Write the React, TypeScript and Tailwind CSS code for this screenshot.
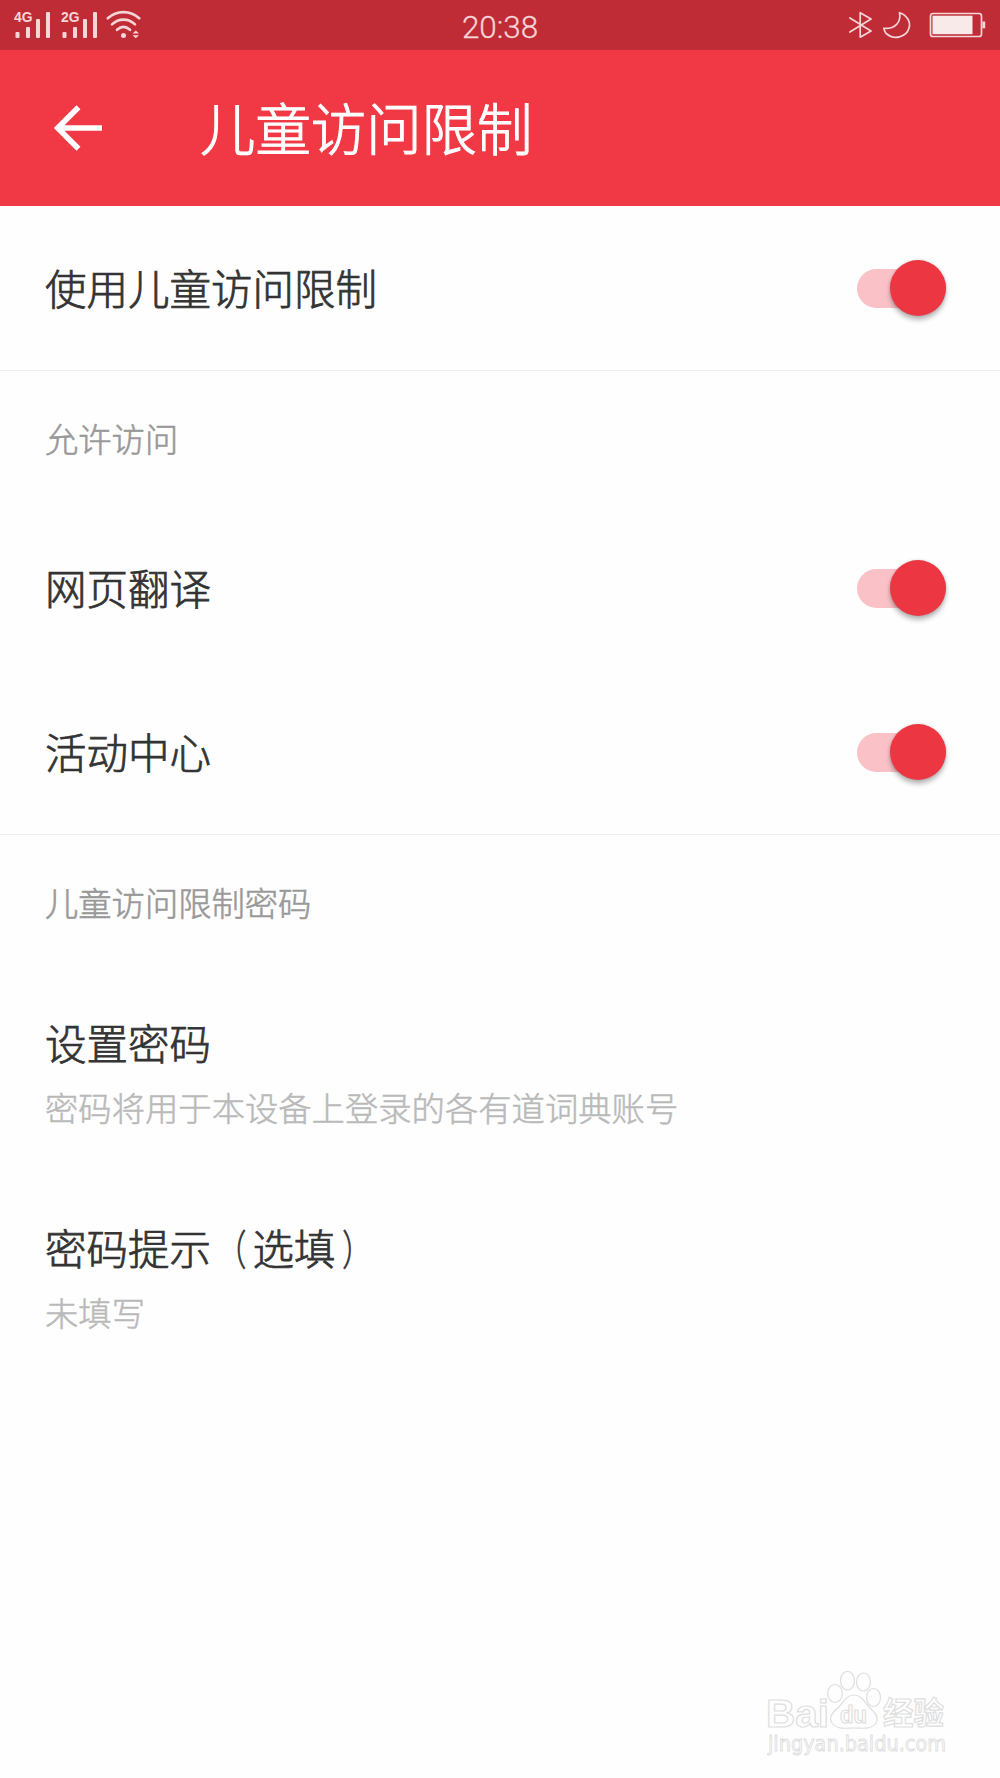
import React from "react";

function Signal({ label }: { label: string }) {
  return (
    <svg width="47" height="50" viewBox="0 0 47 50" fill="#f6d5d7">
      <text x="0" y="22.3" fontSize="14" fontWeight="bold" fontFamily="Liberation Sans, sans-serif" textLength="18.5" lengthAdjust="spacingAndGlyphs">{label}</text>
      <rect x="1.5" y="32" width="4" height="6" rx="1" />
      <rect x="12" y="27" width="4" height="11" rx="1" />
      <rect x="22" y="19" width="4" height="19" rx="1" />
      <rect x="32" y="12" width="4" height="26" rx="1" />
    </svg>
  );
}

function Wifi() {
  return (
    <svg className="-ml-[2px]" width="36" height="50" viewBox="0 0 36 50" fill="none" stroke="#f6d5d7" strokeWidth="2.6" strokeLinecap="round">
      <path d="M1.8 18.3C10.5 10 24.5 10 33.2 18.3" />
      <path d="M6 24.4C12.8 18 22.2 18 29 24.4" />
      <path d="M11 29.8C15.2 26 19.8 26 24 29.8" />
      <circle cx="17.5" cy="35.5" r="2.5" fill="#f6d5d7" stroke="none" />
      <path d="M26.5 33.6L29.8 30.5L33 33.6ZM26.5 35.2L29.8 38.3L33 35.2Z" fill="#f6d5d7" stroke="none" />
    </svg>
  );
}

function StatusBar() {
  return (
    <div className="grid h-[50px] grid-cols-[1fr_auto_1fr] bg-[#bf2c36]">
      <div className="flex pl-[14px]">
        <Signal label="4G" />
        <Signal label="2G" />
        <Wifi />
      </div>
      <div className="font-[Roboto,sans-serif] text-[31.4px] leading-[55px] font-light text-[#f6d5d7] [-webkit-text-stroke:0.3px_#f6d5d7]">20:38</div>
      <div className="flex justify-end pr-[14px]">
        <svg width="137" height="50" viewBox="0 0 137 50" fill="none" stroke="#f6d5d7" strokeWidth="1.7" strokeLinejoin="round" strokeLinecap="round">
          <path d="M.9 18L22 31L11.2 37.2V12.7L22 19L.9 32" />
          <path d="M50.5 12.7C58 15 62 22 60 28C57.4 37.4 44.8 40.4 37.2 33.5C36 32.2 35.3 30.5 34.8 28.4C46 29.2 52.5 22 50.5 12.7Z" />
          <rect x="81.5" y="13.5" width="51" height="23" rx="2.5" />
          <rect x="83.5" y="15.7" width="40" height="18.5" fill="#f9eaea" stroke="none" />
          <rect x="133.4" y="21.5" width="2.8" height="6.8" fill="#f6d5d7" stroke="none" />
        </svg>
      </div>
    </div>
  );
}

function Toggle() {
  return (
    <div className="flex h-[39px] w-[89px] items-center justify-end rounded-full bg-[#fac2c7]">
      <div className="h-14 w-14 shrink-0 rounded-full bg-[#ec3743] shadow-[0_4px_5px_rgba(0,0,0,0.28),0_0_3px_rgba(0,0,0,0.14)]" />
    </div>
  );
}

function SwitchRow({ label }: { label: string }) {
  return (
    <div className="flex h-[164px] items-center justify-between pr-[54px] pl-[45px]">
      <span className="pb-[2px] text-[41.5px] leading-[60px] font-light [-webkit-text-stroke:0.75px_#333]">{label}</span>
      <Toggle />
    </div>
  );
}

function SectionTitle({ children }: { children: React.ReactNode }) {
  return <h2 className="flex h-[135px] items-center pb-[2px] pl-[45px] text-[33.3px] font-light text-[#999] [-webkit-text-stroke:0.6px_#999]">{children}</h2>;
}

function PasswordRow({ title, note }: { title: React.ReactNode; note: string }) {
  return (
    <div className="h-[205px] pl-[45px]">
      <div className="text-[41.5px] leading-[60px] font-light [-webkit-text-stroke:0.75px_#333]">{title}</div>
      <div className="mt-[11px] text-[33.35px] leading-[48px] font-light text-[#b9b9b9] [-webkit-text-stroke:0.5px_#b9b9b9]">{note}</div>
    </div>
  );
}

function Watermark() {
  return (
    <svg className="absolute right-[47px] bottom-[17px] overflow-visible" width="190" height="94" viewBox="0 0 190 94" fill="#fefefe" stroke="#dedede" strokeWidth="1.2">
      <text x="3" y="60" fontSize="39" fontWeight="bold" fontFamily="Liberation Sans, sans-serif" textLength="63" lengthAdjust="spacingAndGlyphs">Bai</text>
      <ellipse cx="72" cy="26.5" rx="7.3" ry="9" />
      <ellipse cx="84.5" cy="13.7" rx="7" ry="9.3" />
      <ellipse cx="100.5" cy="15" rx="7" ry="9" />
      <ellipse cx="110.5" cy="30.5" rx="7" ry="9" />
      <path d="M91 28C83 28 80 36 75 41C68 46 66 52 69 56C74 63 83 61 91 61C99 61 108 63 113 56C116 51 113 46 107 41C102 36 99 28 91 28Z" />
      <text x="77" y="56" fontSize="24" fontFamily="Liberation Sans, sans-serif" fontWeight="bold" textLength="27" lengthAdjust="spacingAndGlyphs">du</text>
      <text x="120" y="57" fontSize="31" fontWeight="bold" fontFamily="Noto Sans CJK SC, sans-serif" textLength="61" lengthAdjust="spacingAndGlyphs">经验</text>
      <text x="5" y="84" fontSize="22" fontFamily="DejaVu Sans, sans-serif" strokeWidth="1" textLength="178" lengthAdjust="spacingAndGlyphs">jingyan.baidu.com</text>
    </svg>
  );
}

export default function App() {
  return (
    <div className="relative h-[1778px] w-[1000px] overflow-hidden bg-[#fefefe] font-['Noto_Sans_CJK_SC',sans-serif] text-[#333]">
      <StatusBar />
      <header className="flex h-[156px] items-center bg-[#f03944] pl-[54px] text-white">
        <svg width="48" height="46" viewBox="0 0 48 46" fill="none" stroke="currentColor" strokeWidth="5.6">
          <path d="M48 23H4M24.5 2.2L3.7 23L24.5 43.8" />
        </svg>
        <h1 className="ml-[98px] pb-[4px] text-[55.4px] leading-[80px] font-light [-webkit-text-stroke:1.1px_white]">儿童访问限制</h1>
      </header>
      <main>
        <section className="border-b border-[#ebebeb]">
          <SwitchRow label="使用儿童访问限制" />
        </section>
        <section className="border-b border-[#ebebeb]">
          <SectionTitle>允许访问</SectionTitle>
          <SwitchRow label="网页翻译" />
          <SwitchRow label="活动中心" />
        </section>
        <section>
          <SectionTitle>儿童访问限制密码</SectionTitle>
          <div className="pt-[42px]">
            <PasswordRow title="设置密码" note="密码将用于本设备上登录的各有道词典账号" />
            <PasswordRow
              title={
                <>
                  密码提示<span className="inline-block scale-x-70">（</span>选填<span className="inline-block scale-x-70">）</span>
                </>
              }
              note="未填写"
            />
          </div>
        </section>
      </main>
      <Watermark />
    </div>
  );
}
